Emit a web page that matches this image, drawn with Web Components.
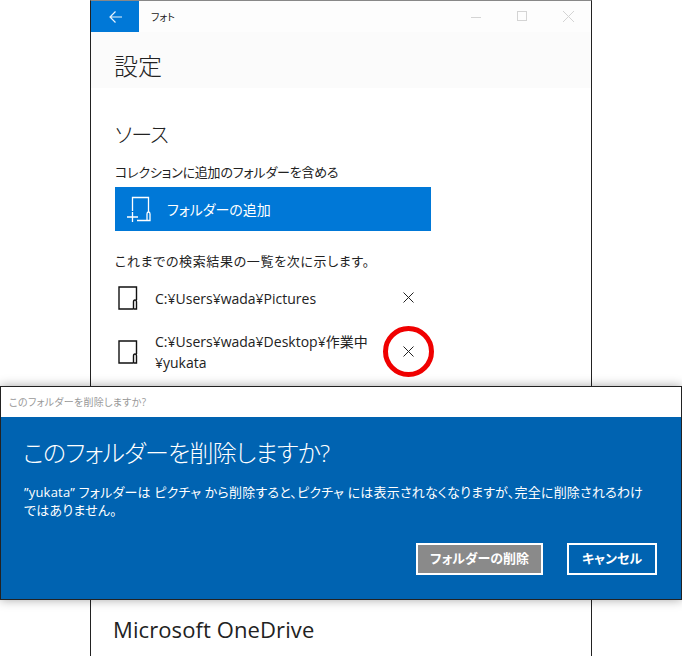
<!DOCTYPE html>
<html lang="ja">
<head>
<meta charset="utf-8">
<title>フォト</title>
<style>
    html, body { margin: 0; height: 656px; overflow: hidden; background: #fff; }
    body {
        position: relative;
        font-family: "Open Sans", "Noto Sans CJK JP", sans-serif;
        color: #111;
    }
</style>
</head>
<body>
<photo-window>
    <photo-titlebar slot="top" title-text="フォト"></photo-titlebar>
    <settings-header slot="top">設定</settings-header>
    <section-title class="source">ソース</section-title>
    <small-label class="first">コレクションに追加のフォルダーを含める</small-label>
    <add-folder-button>フォルダーの追加</add-folder-button>
    <small-label class="second">これまでの検索結果の一覧を次に示します。</small-label>
    <folder-row>C:¥Users¥wada¥Pictures</folder-row>
    <folder-row two-lines>C:¥Users¥wada¥Desktop¥作業中 ¥yukata</folder-row>
    <section-title class="onedrive">Microsoft OneDrive</section-title>
</photo-window>
<red-circle></red-circle>
<confirm-dialog caption="このフォルダーを削除しますか?" heading="このフォルダーを削除しますか?">
    ”yukata” フォルダーは ピクチャ から削除すると、ピクチャ には表示されなくなりますが、完全に削除されるわけではありません。
</confirm-dialog>

<script>
class PhotoWindow extends HTMLElement {
    constructor() {
        super();
        this.attachShadow({mode: 'open'});
        this.shadowRoot.innerHTML = `
            <style>
                :host {
                    display: flex;
                    flex-direction: column;
                    width: 500px;
                    height: 655px;
                    margin-left: 90px;
                    border: 1px solid #222;
                    border-top-color: #888;
                    border-bottom: none;
                    background: #fff;
                }
                .content { display: flex; flex-direction: column; padding: 0 24px; }
            </style>
            <slot name="top"></slot>
            <div class="content"><slot></slot></div>
        `;
    }
}

class PhotoTitlebar extends HTMLElement {
    constructor() {
        super();
        this.attachShadow({mode: 'open'});
        this.shadowRoot.innerHTML = `
            <style>
                :host { display: flex; align-items: center; height: 31px; background: #fdfdfd; }
                .back {
                    display: flex; align-items: center; justify-content: center;
                    width: 48px; height: 31px; background: #0078d7;
                }
                .name { margin-left: 12px; font-size: 10px; color: #222; font-feature-settings: "palt"; }
                .controls { display: flex; margin-left: auto; }
                .controls svg { display: block; width: 46px; height: 31px; }
                svg { fill: none; stroke: #d4d4d4; stroke-width: 1; }
            </style>
            <div class="back">
                <svg width="13" height="12" viewBox="0 0 13 12" style="stroke:#e8f3fc;stroke-width:1.2">
                    <path d="M1 6H13M6.5 .5L1 6L6.5 11.5" />
                </svg>
            </div>
            <span class="name"></span>
            <div class="controls">
                <svg viewBox="0 0 46 31"><path d="M18 16.5H28" /></svg>
                <svg viewBox="0 0 46 31"><rect x="18.5" y="10.5" width="9" height="9" /></svg>
                <svg viewBox="0 0 46 31"><path d="M18 10L29 21M29 10L18 21" /></svg>
            </div>
        `;
        this.shadowRoot.querySelector('.name').textContent = this.getAttribute('title-text');
    }
}

class SettingsHeader extends HTMLElement {
    constructor() {
        super();
        this.attachShadow({mode: 'open'});
        this.shadowRoot.innerHTML = `
            <style>
                :host {
                    display: block;
                    height: 56px;
                    padding-left: 23px;
                    background: #fbfbfb;
                    font-size: 24px;
                    font-weight: 300;
                    line-height: 68px;
                    color: #222;
                }
            </style>
            <slot></slot>
        `;
    }
}

class SectionTitle extends HTMLElement {
    constructor() {
        super();
        this.attachShadow({mode: 'open'});
        this.shadowRoot.innerHTML = `
            <style>
                :host { display: block; font-size: 22px; line-height: 36px; color: #222; }
                :host(.source) {
                    margin-top: 28px;
                    font-size: 21px;
                    font-weight: 300;
                    font-feature-settings: "palt";
                    letter-spacing: -1px;
                }
                :host(.onedrive) { margin-top: 232px; margin-left: -2px; letter-spacing: .1px; }
            </style>
            <slot></slot>
        `;
    }
}

class SmallLabel extends HTMLElement {
    constructor() {
        super();
        this.attachShadow({mode: 'open'});
        this.shadowRoot.innerHTML = `
            <style>
                :host {
                    display: block;
                    font-size: 13px;
                    line-height: 20px;
                    font-feature-settings: "palt";
                    color: #222;
                }
                :host(.first) { margin-top: 10px; letter-spacing: -.2px; }
                :host(.second) { margin-top: 20px; letter-spacing: .65px; }
            </style>
            <slot></slot>
        `;
    }
}

class AddFolderButton extends HTMLElement {
    constructor() {
        super();
        this.attachShadow({mode: 'open'});
        this.shadowRoot.innerHTML = `
            <style>
                :host {
                    display: flex;
                    align-items: center;
                    width: 316px;
                    height: 44px;
                    margin-top: 5px;
                    background: #0078d7;
                    color: #fff;
                    font-size: 14px;
                    font-feature-settings: "palt";
                }
                svg { flex: none; width: 25px; height: 27px; margin-left: 11px; fill: none; stroke: #fff; stroke-width: 1.3; }
                span { margin-left: 16px; }
            </style>
            <svg viewBox="0 0 25 27">
                <path d="M6.5 15V1.5H22.5V16" />
                <path d="M1 21H12M6.5 16V26" />
                <path d="M11 24.5H24V18Q24 16 22.5 16T21 18V24.5" />
            </svg>
            <span><slot></slot></span>
        `;
    }
}

class FolderRow extends HTMLElement {
    constructor() {
        super();
        this.attachShadow({mode: 'open'});
        this.shadowRoot.innerHTML = `
            <style>
                :host {
                    display: flex;
                    align-items: center;
                    height: 48px;
                    margin-top: 3px;
                    font-size: 14px;
                    line-height: 21px;
                    color: #222;
                }
                :host([two-lines]) { height: 54px; margin-top: 3px; }
                .icon { flex: none; width: 20px; height: 24px; margin-left: 3px; fill: none; stroke: #111; stroke-width: 1.4; }
                .path { width: 224px; margin-left: 17px; }
                .close { flex: none; width: 11px; height: 11px; margin: 0 0 2px 24px; fill: none; stroke: #222; stroke-width: 1; }
            </style>
            <svg class="icon" viewBox="0 0 20 24">
                <path d="M15.5 23H1V1H18.5V14" />
                <path d="M15.5 23V16Q15.5 14 17 14T18.5 16V23H15.5" />
            </svg>
            <div class="path"><slot></slot></div>
            <svg class="close" viewBox="0 0 11 11"><path d="M.5 .5L10.5 10.5M10.5 .5L.5 10.5" /></svg>
        `;
    }
}

class RedCircle extends HTMLElement {
    constructor() {
        super();
        this.attachShadow({mode: 'open'});
        this.shadowRoot.innerHTML = `
            <style>
                :host {
                    position: absolute;
                    left: 383px;
                    top: 326px;
                    width: 41px;
                    height: 41px;
                    border: 5px solid #f00000;
                    border-radius: 50%;
                }
            </style>
        `;
    }
}

class ConfirmDialog extends HTMLElement {
    constructor() {
        super();
        this.attachShadow({mode: 'open'});
        this.shadowRoot.innerHTML = `
            <style>
                :host {
                    position: absolute;
                    left: 0;
                    top: 386px;
                    width: 680px;
                    border: 1px solid #222;
                    box-shadow: 0 0 10px rgba(0, 0, 0, .35);
                    background: #0063b1;
                    font-feature-settings: "palt";
                }
                .caption {
                    height: 30px;
                    padding-left: 8px;
                    background: #fff;
                    color: #999;
                    font-size: 10px;
                    letter-spacing: .3px;
                    line-height: 30px;
                }
                .body { display: flex; flex-direction: column; padding: 19px 24px 24px 23px; color: #fff; }
                h1 { margin: 0 0 0 -1px; font-size: 24px; font-weight: 300; letter-spacing: -.8px; line-height: 34px; }
                p { margin: 13px 8px 0 0; font-size: 13px; letter-spacing: .2px; line-height: 18px; }
                .buttons { display: flex; justify-content: flex-end; gap: 24px; margin-top: 24px; }
                button {
                    height: 32px;
                    padding: 0 0 3px;
                    border: 2px solid #fff;
                    background: transparent;
                    color: #fff;
                    font: 700 13px "Open Sans", "Noto Sans CJK JP", sans-serif;
                    font-feature-settings: "palt";
                }
                .delete { width: 127px; background: #8a8a8a; }
                .cancel { width: 90px; }
            </style>
            <div class="caption"></div>
            <div class="body">
                <h1></h1>
                <p><slot></slot></p>
                <div class="buttons">
                    <button class="delete">フォルダーの削除</button>
                    <button class="cancel">キャンセル</button>
                </div>
            </div>
        `;
        this.shadowRoot.querySelector('.caption').textContent = this.getAttribute('caption');
        this.shadowRoot.querySelector('h1').textContent = this.getAttribute('heading');
    }
}

customElements.define('photo-window', PhotoWindow);
customElements.define('photo-titlebar', PhotoTitlebar);
customElements.define('settings-header', SettingsHeader);
customElements.define('section-title', SectionTitle);
customElements.define('small-label', SmallLabel);
customElements.define('add-folder-button', AddFolderButton);
customElements.define('folder-row', FolderRow);
customElements.define('red-circle', RedCircle);
customElements.define('confirm-dialog', ConfirmDialog);
</script>
</body>
</html>
